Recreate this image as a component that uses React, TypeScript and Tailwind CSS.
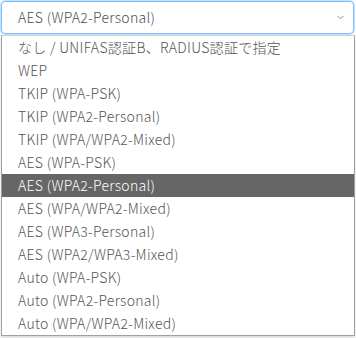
import { ChevronDown } from 'lucide-react';

const options = [
  'なし / UNIFAS認証B、RADIUS認証で指定',
  'WEP',
  'TKIP (WPA-PSK)',
  'TKIP (WPA2-Personal)',
  'TKIP (WPA/WPA2-Mixed)',
  'AES (WPA-PSK)',
  'AES (WPA2-Personal)',
  'AES (WPA/WPA2-Mixed)',
  'AES (WPA3-Personal)',
  'AES (WPA2/WPA3-Mixed)',
  'Auto (WPA-PSK)',
  'Auto (WPA2-Personal)',
  'Auto (WPA/WPA2-Mixed)',
];

const selected = 'AES (WPA2-Personal)';

export default function App() {
  return (
    <div
      className="w-[356px] h-[338px] bg-white overflow-hidden font-light tracking-[0.3px]"
      style={{ fontFamily: '"Noto Sans CJK JP", "Noto Sans", sans-serif' }}
    >
      <div className="pt-px pl-px w-[354px]">
        <div className="h-[33px] flex items-center justify-between pl-4 pr-[7px] border border-[#80bdff] rounded-[4px] shadow-[0_0_0_1px_rgba(128,189,255,0.45)] text-[14px] text-[#495057]">
          <span>{selected}</span>
          <ChevronDown size={11} strokeWidth={1.75} className="text-[#6c757d]" />
        </div>
        <ul className="mt-px w-[354px] border border-[#a0a0a0] border-t-[#d0d0d0] bg-white shadow-[0_2px_3px_rgba(0,0,0,0.15)]">
          {options.map((o) => (
            <li
              key={o}
              className={
                o === selected
                  ? 'h-[23px] flex items-center pl-4 pb-px text-[14px] bg-[#666666] text-white'
                  : 'h-[23px] flex items-center pl-4 pb-px text-[14px] text-[#555555]'
              }
            >
              {o}
            </li>
          ))}
        </ul>
      </div>
    </div>
  );
}
